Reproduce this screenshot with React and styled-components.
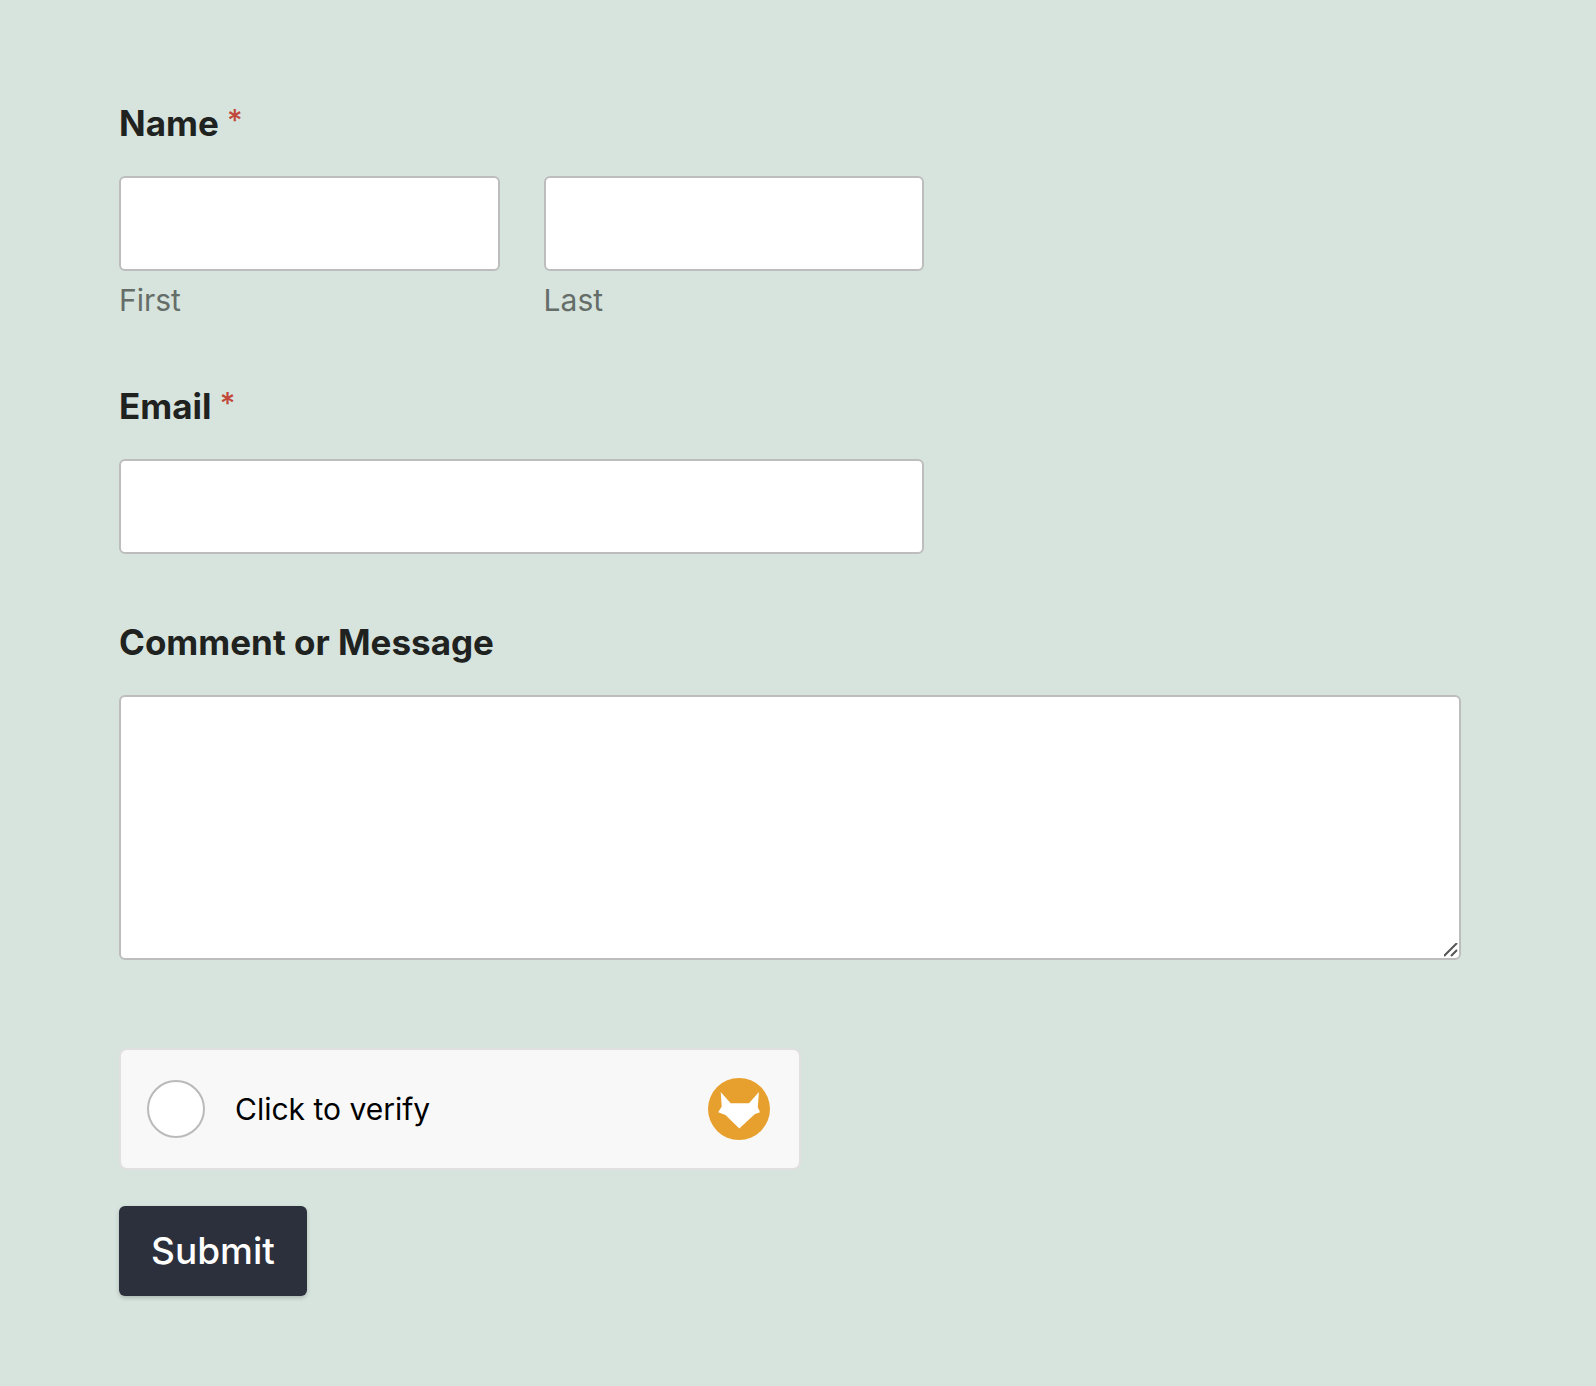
import React from "react";
import styled, { createGlobalStyle, css } from "styled-components";

const GlobalStyle = createGlobalStyle`
  *, *::before, *::after { box-sizing: border-box; }
  body {
    margin: 0;
    background: #d7e4dd;
    color: #20221f;
    font-family: Inter, "Liberation Sans", sans-serif;
  }
`;

const Form = styled.form`
  display: flex;
  flex-direction: column;
  align-items: flex-start;
  padding: 101px 135px 90px 119px;
`;

const Fields = styled.div`
  display: flex;
  flex-direction: column;
  gap: 66px;
  width: 100%;
  margin-bottom: 88px;
`;

const Field = styled.div`
  display: flex;
  flex-direction: column;
  width: ${({ $wide }) => ($wide ? "100%" : "60%")};
`;

const NameGroup = styled.fieldset`
  width: 60%;
  min-width: 0;
  margin: 0;
  padding: 0;
  border: 0;
`;

const titleText = css`
  display: block;
  margin-bottom: 31px;
  padding: 0;
  font-size: 35px;
  font-weight: 700;
  line-height: 44px;
`;

const Title = styled.label`
  ${titleText}
`;

const Legend = styled.legend`
  ${titleText}
`;

const Asterisk = styled.span`
  color: #c1483a;
  font-size: 30px;
  font-weight: 500;
  line-height: 36px;
  vertical-align: text-top;
`;

const NameRow = styled.div`
  display: grid;
  grid-template-columns: 1fr 1fr;
  gap: 44px;
`;

const NamePart = styled.div`
  display: flex;
  flex-direction: column;
  gap: 12px;
`;

const controlStyle = css`
  display: block;
  width: 100%;
  margin: 0;
  padding: 12px 24px;
  border: 2px solid #bdbdbd;
  border-radius: 6px;
  background: #fff;
  color: inherit;
  font-family: inherit;
  font-size: 32px;
`;

const TextInput = styled.input`
  ${controlStyle}
  height: 95px;
`;

const MessageBox = styled.textarea`
  ${controlStyle}
  height: 265px;
  resize: vertical;

  &::-webkit-resizer {
    background: url("data:image/svg+xml,%3Csvg xmlns='http://www.w3.org/2000/svg' viewBox='0 0 15 15'%3E%3Cpath d='M0 13L13 0M7 13L13 7' stroke='%23555' stroke-width='2'/%3E%3C/svg%3E") no-repeat;
  }
`;

const SubLabel = styled.label`
  color: #656d68;
  font-size: 30px;
  line-height: 35px;
`;

const VerifyCard = styled.div`
  display: flex;
  align-items: center;
  gap: 30px;
  width: 682px;
  max-width: 100%;
  height: 122px;
  margin-bottom: 36px;
  padding: 0 29px 0 26px;
  border: 2px solid #e0e0e0;
  border-radius: 8px;
  background: #f8f8f8;
`;

const VerifyCheck = styled.input`
  flex: none;
  width: 58px;
  height: 58px;
  margin: 0;
  appearance: none;
  border: 2px solid #bababa;
  border-radius: 50%;
  background: #fff;

  &:checked {
    background: #e7a02e;
  }
`;

const VerifyLabel = styled.label`
  flex: 1;
  color: #000;
  font-size: 30px;
  line-height: 35px;
`;

const FoxLogo = styled.svg`
  flex: none;
  width: 62px;
  height: 62px;
`;

const SubmitButton = styled.button`
  padding: 23px 32px;
  border: 0;
  border-radius: 6px;
  background: #2b303c;
  box-shadow: 0 2px 4px rgba(0, 0, 0, 0.2);
  color: #fff;
  font-family: inherit;
  font-size: 37px;
  font-weight: 500;
  line-height: 44px;
`;

const Required = () => <Asterisk aria-hidden="true">*</Asterisk>;

export default function App() {
  return (
    <>
      <GlobalStyle />
      <Form onSubmit={(e) => e.preventDefault()}>
        <Fields>
          <NameGroup>
            <Legend>Name <Required /></Legend>
            <NameRow>
              <NamePart>
                <TextInput id="first" type="text" required />
                <SubLabel htmlFor="first">First</SubLabel>
              </NamePart>
              <NamePart>
                <TextInput id="last" type="text" required />
                <SubLabel htmlFor="last">Last</SubLabel>
              </NamePart>
            </NameRow>
          </NameGroup>
          <Field>
            <Title htmlFor="email">Email <Required /></Title>
            <TextInput id="email" type="email" required />
          </Field>
          <Field $wide>
            <Title htmlFor="message">Comment or Message</Title>
            <MessageBox id="message" />
          </Field>
        </Fields>
        <VerifyCard>
          <VerifyCheck id="verify" type="checkbox" />
          <VerifyLabel htmlFor="verify">Click to verify</VerifyLabel>
          <FoxLogo viewBox="0 0 62 62" aria-hidden="true">
            <circle cx="31" cy="31" r="31" fill="#e7a02e" />
            <path
              d="M12.7 14L22.7 25.3H41L50.9 14L49.8 29.3L52 34.2L47 36L43.7 39L31.3 50.6L17.5 37L10.2 34.3L13.7 28.5Z"
              fill="#fff"
            />
          </FoxLogo>
        </VerifyCard>
        <SubmitButton type="submit">Submit</SubmitButton>
      </Form>
    </>
  );
}
